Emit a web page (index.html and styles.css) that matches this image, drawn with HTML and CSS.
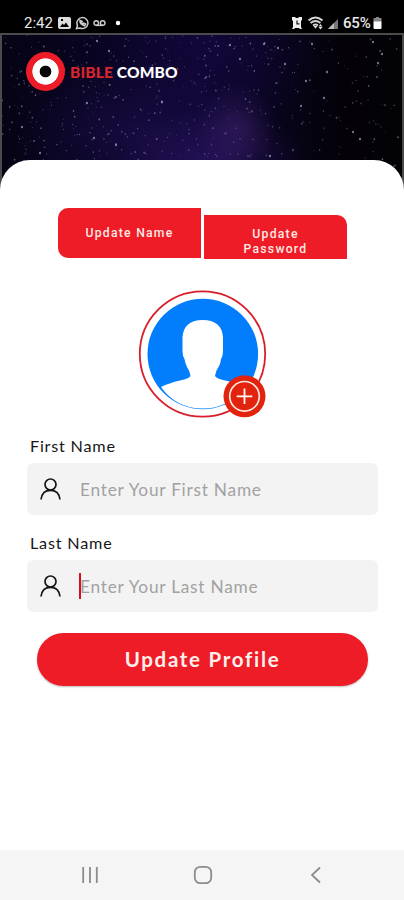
FILE: index.html
```html
<!DOCTYPE html>
<html lang="en">
<head>
  <meta charset="UTF-8">
  <meta name="viewport" content="width=device-width, initial-scale=1.0">
  <title>Bible Combo - Update Profile</title>
  <link rel="stylesheet" href="styles.css">
</head>
<body>
  <div class="status-bar">
    <span class="time">2:42</span>
    <svg class="status-left" width="65" height="14" viewBox="0 0 65 14">
      <path fill="#ddd" fill-rule="evenodd" d="M2 1h9q2 0 2 2v8q0 2-2 2H2q-2 0-2-2V3q0-2 2-2zM2 11h9L8 6.500l-2 2.500-1.500-1.500zM3 3v2h2V3z"/>
      <path fill="none" stroke="#ccc" stroke-width="1.500" d="M18.500 12.500l1-3A5.500 5.500 0 1 1 22 12z"/>
      <path fill="none" stroke="#ccc" stroke-width="1.700" d="M22 4.500c0 3 2 4.500 4.500 5.200l1-1.500-2-1-1 .8-1.300-1.600.7-1z"/>
      <g fill="none" stroke="#ccc" stroke-width="1.400"><circle cx="38.300" cy="7" r="2.300"/><circle cx="44.700" cy="7" r="2.300"/><path d="M38 9.400h7"/></g>
      <circle cx="60" cy="7" r="2.200" fill="#fff"/>
    </svg>
    <svg class="status-right" width="50" height="14" viewBox="0 0 50 14">
      <path fill="#eee" d="M1 1h3l1 1h2l1-1h3v3l-1 1v6l1 2H9l-1-1H4l-1 1H1l1-2V5L1 4z"/>
      <path fill="none" stroke="#111" stroke-width="1.200" d="M6 4.500v3.300h2.500"/>
      <g fill="none" stroke="#d5d5d5" stroke-width="1.800"><path d="M17.500 4.500q7-6 14 0M19.500 7q5-4 10 0M22 9.500q2.500-2 5 0"/></g>
      <path fill="#ddd" d="M22.500 10h4l-2 2.800zM29.500 8l2 2.500h-4zM29.500 13.500l2-2.500h-4z"/>
      <path fill="#777" d="M37 13L47 3v10z"/><path fill="#bbb" d="M37 13l6-6v6z"/>
    </svg>
    <span class="percent">65%</span>
    <svg class="battery" width="9" height="12" viewBox="0 0 9 12">
      <path fill="#888" d="M3 0h3v1h2.500v4h-8V1H3z"/><path fill="#fff" d="M.5 4.500h8V11q0 1-1 1h-6q-1 0-1-1z"/>
    </svg>
  </div>

  <header class="hero">
    <svg class="stars" id="stars" width="400" height="155" viewBox="0 0 400 155"></svg>
    <div class="brand">
      <span class="logo"></span>
      <span class="brand-name"><span class="brand-red">BIBLE</span> COMBO</span>
    </div>
  </header>

  <main class="sheet">
    <div class="tabs">
      <button class="tab tab-name">Update Name</button>
      <button class="tab tab-password">Update Password</button>
    </div>

    <svg class="avatar" width="130" height="130" viewBox="0 0 130 130">
      <circle cx="65.500" cy="65" r="62.700" fill="#fff" stroke="#d91e2b" stroke-width="1.800"/>
      <circle cx="65.800" cy="65" r="55.300" fill="#027efd"/>
      <path fill="#fff" d="M24 98Q32 94 43 91.500Q52 89.500 53.500 87Q53 82 50 78Q48 74 47.500 70Q45.500 67 45.500 62V48Q47 31 65.700 31Q84.500 31 86 48V62Q86 67 84 70Q83.500 75 81.500 78Q78.500 82 78 87Q79.500 89.500 88 91.500Q100 94 108 98Q92 119.500 65.800 119.500Q39 119.500 24 98Z"/>
      <circle cx="107.500" cy="107.300" r="21" fill="#e2230d"/>
      <circle cx="107.500" cy="107.300" r="14.800" fill="none" stroke="#ffe9df" stroke-width="1.700"/>
      <path d="M107.500 99.500v15.600M99.700 107.300h15.600" stroke="#fff" stroke-width="1.800"/>
    </svg>

    <form class="form">
      <label class="label" for="first">First Name</label>
      <div class="field">
        <svg width="22" height="22" viewBox="0 0 22 22" fill="none" stroke="#151515" stroke-width="1.700">
          <circle cx="11.500" cy="6.500" r="5.500"/><path d="M2 21.500Q3 12.300 11.500 12.300T21 21.500"/>
        </svg>
        <input id="first" type="text" placeholder="Enter Your First Name">
      </div>
      <label class="label" for="last">Last Name</label>
      <div class="field">
        <svg width="22" height="22" viewBox="0 0 22 22" fill="none" stroke="#151515" stroke-width="1.700">
          <circle cx="11.500" cy="6.500" r="5.500"/><path d="M2 21.500Q3 12.300 11.500 12.300T21 21.500"/>
        </svg>
        <span class="cursor"></span>
        <input id="last" class="last-input" type="text" placeholder="Enter Your Last Name">
      </div>
      <button class="submit" type="button">Update Profile</button>
    </form>
  </main>

  <nav class="nav-bar">
    <svg width="18" height="18" viewBox="0 0 18 18" stroke="#8c8c8c" stroke-width="1.800"><path d="M2.200 1v16M9 1v16M15.800 1v16"/></svg>
    <svg width="20" height="20" viewBox="0 0 20 20" fill="none" stroke="#8c8c8c" stroke-width="1.800"><rect x="1.800" y="1.800" width="16.400" height="16.400" rx="5.500"/></svg>
    <svg width="18" height="18" viewBox="0 0 18 18" fill="none" stroke="#8c8c8c" stroke-width="1.800"><path d="M13 1.500L5 9l8 7.500"/></svg>
  </nav>

  <script>
    // fixed seed so the sky is the same on every load
    let seed = 42;
    function rand() {
      seed = (seed * 16807) % 2147483647;
      return seed / 2147483647;
    }

    function addStar(x, y, r, opacity) {
      const star = document.createElementNS('http://www.w3.org/2000/svg', 'ellipse');
      star.setAttribute('cx', x);
      star.setAttribute('cy', y);
      star.setAttribute('rx', r);
      star.setAttribute('ry', r * 1.2);
      star.setAttribute('fill', '#b9b2d8');
      star.setAttribute('opacity', opacity);
      document.getElementById('stars').appendChild(star);
    }

    for (let i = 0; i < 750; i++) {
      const x = rand() * 400;
      // the sky thins out to the right
      if (x > 280 && rand() < 0.5) continue;
      addStar(x, rand() * 155, 0.4 + rand() * 0.5, 0.15 + rand() * 0.4);
    }

    const bright = [[262, 9], [276, 13], [283, 29], [310, 9], [371, 7], [380, 19], [376, 28], [325, 37],
      [304, 46], [95, 6], [107, 16], [85, 68], [160, 67], [114, 110], [92, 103], [38, 118],
      [351, 97], [358, 104], [322, 63], [299, 71], [268, 121], [20, 92], [238, 24], [228, 10]];
    bright.forEach(([x, y]) => addStar(x, y, 1.1, 0.65));
  </script>
</body>
</html>
```

FILE: styles.css
```css
* {
  box-sizing: border-box;
}

body {
  margin: 0;
  height: 100vh;
  display: flex;
  flex-direction: column;
  overflow: hidden;
  background: #fff;
  font-family: Lato, sans-serif;
}

.status-bar {
  height: 33px;
  flex-shrink: 0;
  display: flex;
  align-items: center;
  padding: 13px 22px 0 24px;
  background: #000;
  color: #e8e8e8;
  font-family: Roboto, sans-serif;
}

.time {
  width: 34px;
  font-size: 15px;
}

.status-left {
  margin-right: auto;
}

.percent {
  margin-left: 2px;
  width: 29px;
  font-size: 15px;
  font-weight: 500;
  letter-spacing: -0.2px;
}

.battery {
  margin-left: 1px;
}

.hero {
  height: 157px;
  flex-shrink: 0;
  display: grid;
  border: 2px solid #4b4b4b;
  border-bottom: none;
  background:
    radial-gradient(ellipse 40px 45px at 235px 92px, #4d2b8166, transparent),
    radial-gradient(ellipse 95px 55px at 210px 128px, #3b1c7d77, transparent),
    radial-gradient(ellipse 120px 75px at 130px 98px, #21105388, transparent),
    radial-gradient(ellipse 110px 90px at 210px 15px, #16083faa, transparent),
    linear-gradient(90deg, #050314 0%, #0c0630 50%, #040208 85%, #030205 100%);
}

.stars,
.brand {
  grid-area: 1 / 1;
}

.brand {
  display: flex;
  align-items: center;
  align-self: start;
  gap: 5px;
  padding: 17px 0 0 24px;
}

.logo {
  width: 39px;
  height: 39px;
  border-radius: 50%;
  background: radial-gradient(circle, #070707 5.500px, #fff 6.200px, #fff 12.800px, #ed1c28 13.500px);
}

.brand-name {
  color: #fff;
  font-size: 15.500px;
  font-weight: 900;
  letter-spacing: 0.150px;
  white-space: nowrap;
}

.brand-red {
  color: #dc242d;
}

.sheet {
  flex: 1;
  margin-top: -30px;
  padding: 48px 26px 0 27px;
  display: flex;
  flex-direction: column;
  border-radius: 30px 30px 0 0;
  background: #fff;
  z-index: 1;
}

.tabs {
  display: flex;
  align-items: flex-end;
  gap: 3px;
  margin-left: 31px;
}

.tab {
  width: 143px;
  padding: 0;
  border: none;
  background: #ed1c26;
  color: #ffe9e5;
  font-family: Roboto, sans-serif;
  font-size: 12.200px;
  font-weight: 500;
  line-height: 14.500px;
  letter-spacing: 1.250px;
}

.tab-name {
  height: 50px;
  margin-bottom: 1px;
  padding-top: 1px;
  border-radius: 10px 0 0 10px;
}

.tab-password {
  height: 44px;
  padding: 9px 30px 0;
  border-radius: 0 10px 0 0;
}

.avatar {
  margin: 30px 0 0 110px;
}

.form {
  display: flex;
  flex-direction: column;
}

.label {
  height: 44px;
  padding: 17px 0 0 3px;
  color: #161616;
  font-size: 16.200px;
  line-height: 19px;
  letter-spacing: 0.800px;
}

.field {
  height: 52px;
  display: flex;
  align-items: center;
  margin-bottom: 1px;
  padding-left: 12px;
  border-radius: 6px;
  background: #f3f3f3;
}

.field input {
  flex: 1;
  min-width: 0;
  margin-left: 19px;
  padding: 0;
  border: none;
  outline: none;
  background: none;
  font-family: inherit;
  font-size: 17.300px;
  letter-spacing: 0.750px;
}

.field input::placeholder {
  color: #a2a2a2;
}

.cursor {
  width: 2px;
  height: 26px;
  margin-left: 18px;
  background: #d5101c;
}

.field .last-input {
  margin-left: -1px;
}

.submit {
  height: 53px;
  margin: 20px 10px 0;
  padding-bottom: 3px;
  border: none;
  border-radius: 27px;
  background: #ed1c26;
  box-shadow: 0 1px 2px #bbb;
  color: #fff0ed;
  font-family: inherit;
  font-size: 20.500px;
  font-weight: 700;
  letter-spacing: 1.700px;
}

.nav-bar {
  height: 50px;
  flex-shrink: 0;
  display: flex;
  align-items: center;
  justify-content: space-between;
  padding: 0 79px 0 81px;
  background: #f5f5f5;
}
```
